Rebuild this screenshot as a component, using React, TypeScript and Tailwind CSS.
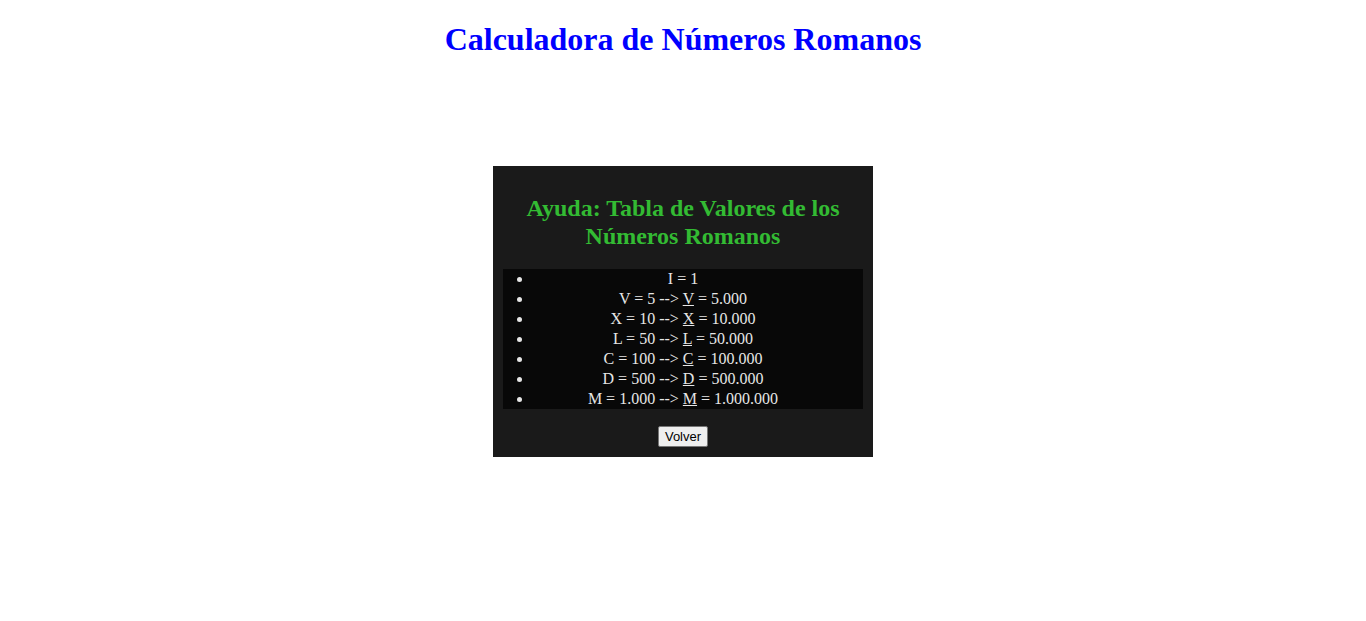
const rows: { base: string; big?: string; bigVal?: string }[] = [
  { base: 'I = 1' },
  { base: 'V = 5 -->', big: 'V', bigVal: '= 5.000' },
  { base: 'X = 10 -->', big: 'X', bigVal: '= 10.000' },
  { base: 'L = 50 -->', big: 'L', bigVal: '= 50.000' },
  { base: 'C = 100 -->', big: 'C', bigVal: '= 100.000' },
  { base: 'D = 500 -->', big: 'D', bigVal: '= 500.000' },
  { base: 'M = 1.000 -->', big: 'M', bigVal: '= 1.000.000' },
];

export default function App() {
  return (
    <div className="min-h-screen bg-white font-['Liberation_Serif',serif]">
      <h1 className="pt-[21px] text-center text-[32px] font-bold leading-[37px] text-[#0000ff]">
        Calculadora de Números Romanos
      </h1>

      <div className="mx-auto mt-[108px] w-[380px] bg-[#1a1a1a] px-[10px] pt-[10px] pb-[10px]">
        <h2 className="mt-[18px] px-4 text-center text-[24px] font-bold leading-[28px] text-[#33bb33]">
          Ayuda: Tabla de Valores de los Números Romanos
        </h2>
        <ul className="mt-[19px] list-disc bg-[#080808] px-[30px] text-center text-[16px] leading-[20px] text-[#e6e6e6]">
          {rows.map((row) => (
            <li key={row.base}>
              {row.base}
              {row.big && (
                <>
                  {' '}
                  <span className="underline">{row.big}</span> {row.bigVal}
                </>
              )}
            </li>
          ))}
        </ul>
        <div className="mt-[17px] flex justify-center">
          <button className="rounded-[2px] border border-[#767676] bg-[#efefef] px-[6px] py-[1px] font-['Liberation_Sans',sans-serif] text-[13px] leading-[17px] text-black">
            Volver
          </button>
        </div>
      </div>
    </div>
  );
}
